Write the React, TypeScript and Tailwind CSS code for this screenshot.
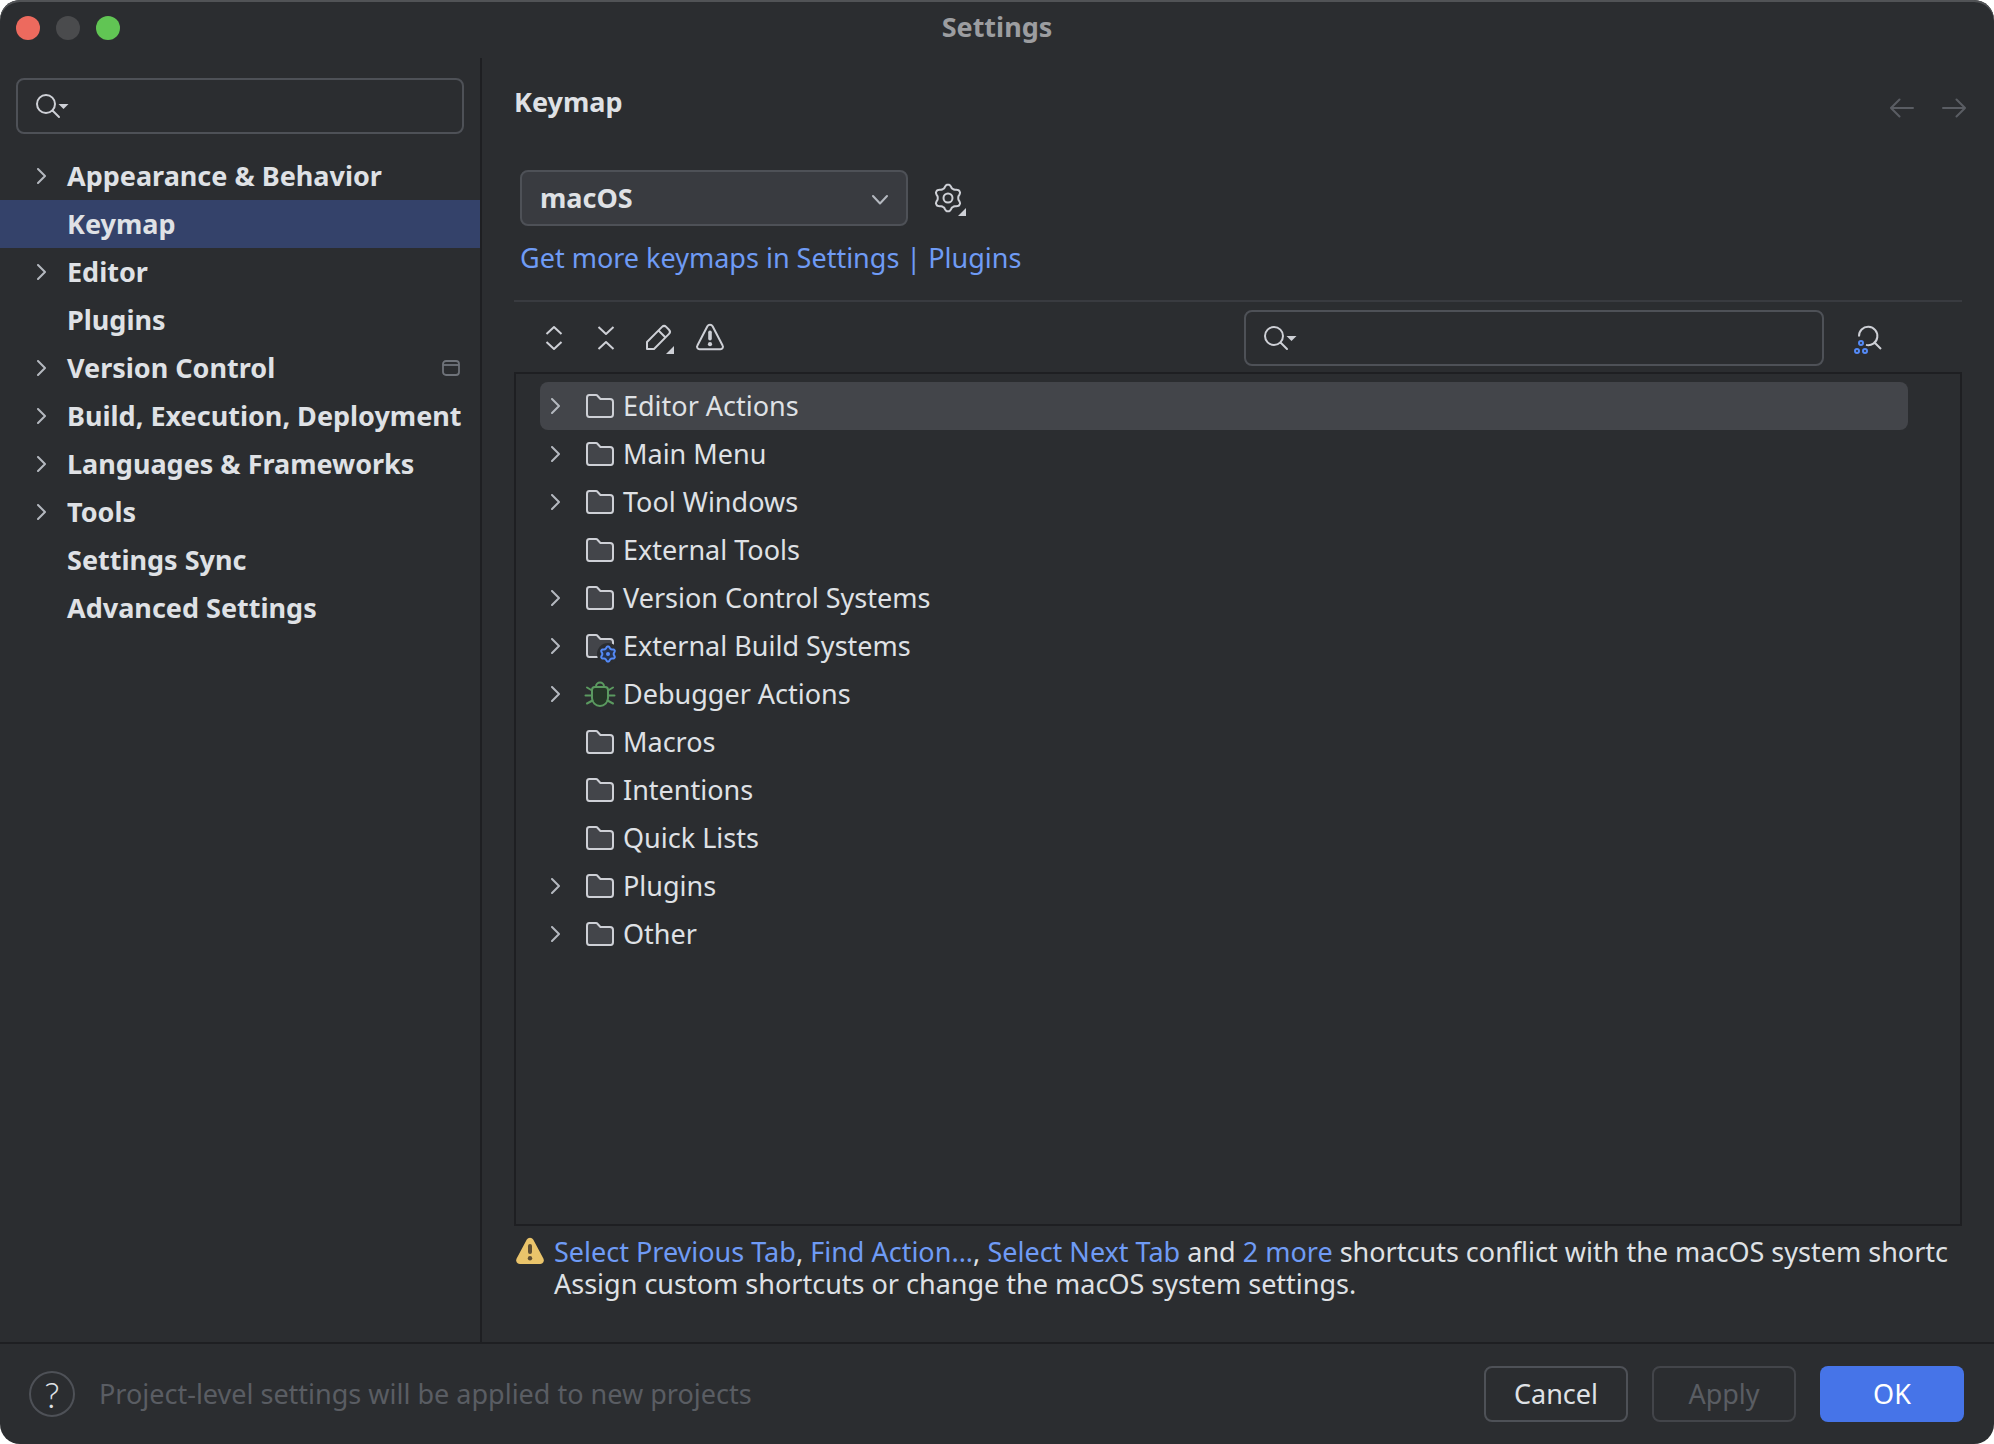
import type { ReactNode } from "react"

type SettingsItem = {
  label: string
  expandable?: boolean
  active?: boolean
  projectLevel?: boolean
}

const settingsItems: SettingsItem[] = [
  { label: "Appearance & Behavior", expandable: true },
  { label: "Keymap", active: true },
  { label: "Editor", expandable: true },
  { label: "Plugins" },
  { label: "Version Control", expandable: true, projectLevel: true },
  { label: "Build, Execution, Deployment", expandable: true },
  { label: "Languages & Frameworks", expandable: true },
  { label: "Tools", expandable: true },
  { label: "Settings Sync" },
  { label: "Advanced Settings" },
]

type ActionGroup = {
  label: string
  icon?: "folder" | "build" | "bug"
  expandable?: boolean
  selected?: boolean
}

const actionGroups: ActionGroup[] = [
  { label: "Editor Actions", expandable: true, selected: true },
  { label: "Main Menu", expandable: true },
  { label: "Tool Windows", expandable: true },
  { label: "External Tools" },
  { label: "Version Control Systems", expandable: true },
  { label: "External Build Systems", icon: "build", expandable: true },
  { label: "Debugger Actions", icon: "bug", expandable: true },
  { label: "Macros" },
  { label: "Intentions" },
  { label: "Quick Lists" },
  { label: "Plugins", expandable: true },
  { label: "Other", expandable: true },
]

// six-toothed cog outline, one tooth pointing up
function cogPath(cx: number, cy: number, r: number, depth: number) {
  const points: string[] = []
  for (let deg = 0; deg < 360; deg += 5) {
    const a = ((deg - 90) * Math.PI) / 180
    const wave = Math.max(-1, Math.min(1, Math.cos((deg * 6 * Math.PI) / 180) * 1.3 - 0.1))
    const radius = r - depth / 2 + (wave * depth) / 2
    points.push(`${(cx + radius * Math.cos(a)).toFixed(2)} ${(cy + radius * Math.sin(a)).toFixed(2)}`)
  }
  return `M${points.join("L")}Z`
}

function Icon({ children }: { children: ReactNode }) {
  return (
    <svg
      className="size-8 shrink-0 overflow-visible text-[#ced0d6]"
      viewBox="0 0 32 32"
      fill="none"
      stroke="currentColor"
      strokeWidth="2"
      strokeLinejoin="round"
      aria-hidden="true"
    >
      {children}
    </svg>
  )
}

function ChevronRight({ visible }: { visible?: boolean }) {
  return (
    <svg className="h-4 w-[9px] shrink-0 text-[#b4b8bf]" viewBox="0 0 9 16" fill="none" stroke="currentColor" strokeWidth="2" aria-hidden="true">
      {visible && <path d="M1 1l7 7-7 7" strokeLinecap="round" strokeLinejoin="round" />}
    </svg>
  )
}

const folderPath =
  "M16.2 8.7l.3.3H26a3 3 0 0 1 3 3v12.3c0 1.6-1.1 2.7-2.3 2.7H5.3C4.1 27 3 25.9 3 24.3V7.7C3 6.1 4.1 5 5.3 5h6.9c.3 0 .6.1.8.3z"

function GroupIcon({ type = "folder" }: { type?: ActionGroup["icon"] }) {
  if (type === "bug") {
    return (
      <Icon>
        <g stroke="#5b9a60" strokeLinecap="round">
          <path d="M11 9h10a3 3 0 0 1 3 3v8a8 8 0 0 1-16 0v-8a3 3 0 0 1 3-3z" fill="#253627" />
          <path d="M12 9v-.5a4 4 0 0 1 8 0V9" />
          <path d="M1.5 17.500H8M24 17.500h6.500M3 9.500l5 3M29 9.500l-5 3M3 25.500l5.500-3M29 25.500l-5.500-3" />
        </g>
      </Icon>
    )
  }
  return (
    <Icon>
      <path d={folderPath} fill="#43454a" />
      {type === "build" && (
        <>
          <circle cx="24" cy="24" r="11" fill="#2b2d30" stroke="none" />
          <path d={cogPath(24, 24, 7.5, 1.8)} stroke="#548af7" fill="#25324d" />
          <circle cx="24" cy="24" r="2" fill="#548af7" stroke="none" />
        </>
      )}
    </Icon>
  )
}

function SearchBox({ label, className }: { label: string; className: string }) {
  return (
    <div className={`flex h-14 items-center rounded-lg border-2 border-[#4e5157] pl-4 pr-3 ${className}`}>
      <Icon>
        <circle cx="12" cy="14" r="9" />
        <path d="M18.500 20.500l6.500 6.500" strokeLinecap="round" />
        <path d="M24.500 14h10l-5 5z" fill="currentColor" stroke="none" />
      </Icon>
      <input type="text" aria-label={label} className="ml-2 min-w-0 flex-1 bg-transparent outline-none" />
    </div>
  )
}

function ToolButton({ label, children }: { label: string; children: ReactNode }) {
  return (
    <button type="button" aria-label={label} className="size-8 shrink-0">
      <Icon>{children}</Icon>
    </button>
  )
}

function Sidebar() {
  return (
    <nav className="w-[482px] shrink-0 border-r-2 border-[#1e1f22] pt-5" aria-label="Settings">
      <SearchBox label="Search settings" className="mx-4" />
      <ul className="mt-[18px] font-bold">
        {settingsItems.map((item) => (
          <li key={item.label}>
            <a
              href="#"
              className={`flex h-12 items-center gap-[21px] whitespace-nowrap pl-[37px] pr-5 ${item.active ? "bg-[#34426a]" : ""}`}
            >
              <ChevronRight visible={item.expandable} />
              {item.label}
              {item.projectLevel && (
                <svg className="ml-auto h-4 w-[18px] text-[#6f737a]" viewBox="0 0 18 16" fill="none" stroke="currentColor" strokeWidth="1.8" aria-hidden="true">
                  <rect x="1" y="1" width="16" height="14" rx="3" />
                  <path d="M1 5h16" />
                </svg>
              )}
            </a>
          </li>
        ))}
      </ul>
    </nav>
  )
}

function Toolbar() {
  return (
    <div className="flex items-center pb-[6px] pl-6 pt-2">
      <div className="flex gap-5">
        <ToolButton label="Expand all">
          <path d="M8.500 12L16 5l7.500 7M8.500 20l7.500 7 7.500-7" />
        </ToolButton>
        <ToolButton label="Collapse all">
          <path d="M8.500 5l7.500 7 7.500-7M8.500 27l7.500-7 7.500 7" />
        </ToolButton>
        <ToolButton label="Edit shortcut">
          <path d="M5 27v-7L20 4.900a3 3 0 0 1 4.200 0L27 7.700a3 3 0 0 1 0 4.200L12 27zM16.500 8.500l7 7" />
          <path d="M32 24v8h-8z" fill="currentColor" stroke="none" />
        </ToolButton>
        <ToolButton label="Show conflicts">
          <path d="M13.400 4.200a3 3 0 0 1 5.200 0l10 19.300a2.500 2.500 0 0 1-2.200 3.800H5.600a2.500 2.500 0 0 1-2.200-3.800z" />
          <rect x="14.200" y="8.500" width="3.600" height="10" rx="1.800" fill="currentColor" stroke="none" />
          <circle cx="16" cy="22.200" r="2.100" fill="currentColor" stroke="none" />
        </ToolButton>
      </div>
      <SearchBox label="Search actions" className="ml-auto mr-7 w-[calc(40%+10px)]" />
      <div className="mr-[78px] flex">
        <ToolButton label="Find actions by shortcut">
          <path d="M7 14.500A9.200 9.200 0 1 1 14 22.900M22.500 20.500l6.500 6.500" />
          <g stroke="#548af7">
            <circle cx="9" cy="21" r="2" />
            <circle cx="5" cy="29" r="2" />
            <circle cx="13" cy="29" r="2" />
          </g>
        </ToolButton>
      </div>
    </div>
  )
}

function ActionTree() {
  return (
    <ul className="flex-1 border-2 border-[#1e1f22] pl-6 pr-[52px] pt-2">
      {actionGroups.map((group) => (
        <li key={group.label}>
          <button
            type="button"
            className={`flex h-12 w-full items-center rounded-lg pl-[11px] text-left ${group.selected ? "bg-[#43454a]" : ""}`}
          >
            <ChevronRight visible={group.expandable} />
            <span className="ml-6 mr-[7px]">
              <GroupIcon type={group.icon} />
            </span>
            {group.label}
          </button>
        </li>
      ))}
    </ul>
  )
}

function ConflictNotice() {
  return (
    <div className="flex gap-2 pb-[42px] pt-[10px] leading-8">
      <Icon>
        <g stroke="none">
          <path d="M12.800 3.600a3.600 3.600 0 0 1 6.400 0l10.300 19.200a3.600 3.600 0 0 1-3.200 5.200H5.700a3.600 3.600 0 0 1-3.200-5.200z" fill="#eac46b" />
          <rect x="14" y="8" width="4" height="10" rx="2" fill="#5e4d33" />
          <circle cx="16" cy="22.200" r="2.200" fill="#5e4d33" />
        </g>
      </Icon>
      <div className="min-w-0 whitespace-nowrap">
        <p>
          <a href="#" className="text-[#6f9bf5]">Select Previous Tab</a>,{" "}
          <a href="#" className="text-[#6f9bf5]">Find Action...</a>,{" "}
          <a href="#" className="text-[#6f9bf5]">Select Next Tab</a> and{" "}
          <a href="#" className="text-[#6f9bf5]">2 more</a> shortcuts conflict with the macOS system shortc
        </p>
        <p>Assign custom shortcuts or change the macOS system settings.</p>
      </div>
    </div>
  )
}

function KeymapPage() {
  return (
    <main className="flex min-w-0 flex-1 flex-col px-8 pt-5">
      <div className="flex h-12 items-center justify-between">
        <h1 className="font-bold">Keymap</h1>
        <div className="-mr-1 flex gap-7 pt-3 text-[#5a5d63]">
          <button type="button" aria-label="Back" disabled>
            <svg className="h-5 w-6" viewBox="0 0 24 20" fill="none" stroke="currentColor" strokeWidth="2" strokeLinecap="round">
              <path d="M23 10H1M9.500 1.500L1 10l8.500 8.500" />
            </svg>
          </button>
          <button type="button" aria-label="Forward" disabled>
            <svg className="h-5 w-6" viewBox="0 0 24 20" fill="none" stroke="currentColor" strokeWidth="2" strokeLinecap="round">
              <path d="M1 10h22M14.500 1.500L23 10l-8.500 8.500" />
            </svg>
          </button>
        </div>
      </div>

      <div className="ml-[6px] mt-11 flex items-center gap-6">
        <div className="relative w-[388px]">
          <select
            aria-label="Keymap"
            className="h-14 w-full appearance-none rounded-lg border-2 border-[#4e5157] bg-[#393b40] px-[18px] font-bold"
          >
            <option>macOS</option>
          </select>
          <svg className="pointer-events-none absolute right-5 top-6 h-3 w-4 text-[#b4b8bf]" viewBox="0 0 16 12" fill="none" stroke="currentColor" strokeWidth="2" aria-hidden="true">
            <path d="M1 2l7 7.500L15 2" strokeLinecap="round" strokeLinejoin="round" />
          </svg>
        </div>
        <ToolButton label="Keymap options">
          <path d={cogPath(16, 16, 13.3, 3)} />
          <circle cx="16" cy="16" r="4.500" />
          <path d="M34 26v8h-8z" fill="currentColor" stroke="none" />
        </ToolButton>
      </div>
      <a href="#" className="ml-[6px] flex h-16 items-center self-start text-[#6f9bf5]">
        Get more keymaps in Settings | Plugins
      </a>

      <section className="mt-[10px] flex flex-1 flex-col border-t-2 border-[#393b40]">
        <Toolbar />
        <ActionTree />
        <ConflictNotice />
      </section>
    </main>
  )
}

function Footer() {
  return (
    <footer className="flex h-[102px] shrink-0 items-center border-t-2 border-[#1e1f22] pl-[29px] pr-[30px]">
      <button
        type="button"
        aria-label="Help"
        className="flex size-[46px] items-center justify-center rounded-full border-2 border-[#4e5157] font-['Lato',sans-serif] text-4xl font-light"
      >
        ?
      </button>
      <p className="ml-6 text-[#5a5d63]">Project-level settings will be applied to new projects</p>
      <div className="ml-auto flex gap-6">
        <button type="button" className="h-14 w-36 rounded-lg border-2 border-[#4e5157]">Cancel</button>
        <button type="button" disabled className="h-14 w-36 rounded-lg border-2 border-[#43454a] text-[#5a5d63]">Apply</button>
        <button type="button" className="h-14 w-36 rounded-lg bg-[#4674e8] text-white">OK</button>
      </div>
    </footer>
  )
}

export default function App() {
  return (
    <div className="min-h-screen bg-white">
      <div className="flex min-h-screen flex-col overflow-hidden rounded-[20px] bg-[#2b2d30] font-['Noto_Sans',sans-serif] text-[27px] leading-10 text-[#dfe1e5] shadow-[inset_0_2px_0_#515356]">
        <header className="relative flex h-[58px] shrink-0 items-center justify-center pb-1">
          <div className="absolute left-4 top-4 flex gap-4">
            <button type="button" aria-label="Close" className="size-6 rounded-full bg-[#ed6a5e]" />
            <button type="button" aria-label="Minimize" disabled className="size-6 rounded-full bg-[#4a4b4d]" />
            <button type="button" aria-label="Zoom" className="size-6 rounded-full bg-[#61c554]" />
          </div>
          <span className="font-bold text-[#9c9da0]">Settings</span>
        </header>
        <div className="flex flex-1">
          <Sidebar />
          <KeymapPage />
        </div>
        <Footer />
      </div>
    </div>
  )
}
